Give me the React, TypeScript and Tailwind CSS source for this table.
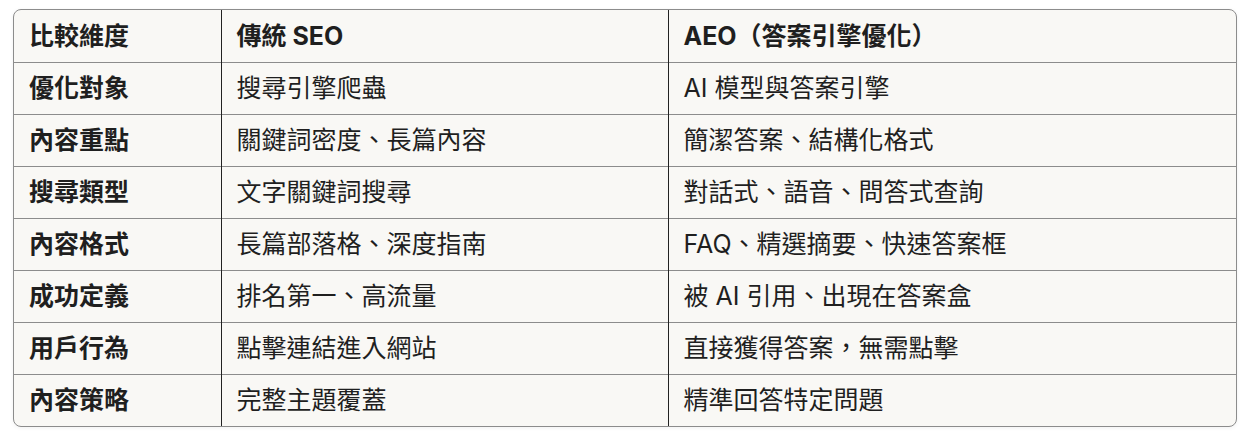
const header = ["比較維度", "傳統 SEO", "AEO（答案引擎優化）"];

const rows: [string, string, string][] = [
  ["優化對象", "搜尋引擎爬蟲", "AI 模型與答案引擎"],
  ["內容重點", "關鍵詞密度、長篇內容", "簡潔答案、結構化格式"],
  ["搜尋類型", "文字關鍵詞搜尋", "對話式、語音、問答式查詢"],
  ["內容格式", "長篇部落格、深度指南", "FAQ、精選摘要、快速答案框"],
  ["成功定義", "排名第一、高流量", "被 AI 引用、出現在答案盒"],
  ["用戶行為", "點擊連結進入網站", "直接獲得答案，無需點擊"],
  ["內容策略", "完整主題覆蓋", "精準回答特定問題"],
];

export default function App() {
  return (
    <div
      className="w-[1248px] h-[440px] bg-white pt-[9px] pl-[13px]"
      style={{ fontFamily: 'Inter, "Noto Sans CJK TC", sans-serif' }}
    >
      <div className="w-[1224px] rounded-lg border border-[#8c8c8c] bg-[#f9f8f5] overflow-hidden shadow-[0_1px_4px_rgba(0,0,0,0.06)]">
        <table className="w-full border-collapse table-fixed text-[#1f1f1f] text-[25px] leading-[30px]">
          <colgroup>
            <col className="w-[207px]" />
            <col className="w-[447px]" />
            <col />
          </colgroup>
          <thead>
            <tr className="h-[52px]">
              {header.map((h, i) => (
                <th
                  key={h}
                  className={`text-left font-bold pl-[15px] ${
                    i > 0 ? "border-l border-[#222]" : ""
                  }`}
                >
                  {h}
                </th>
              ))}
            </tr>
          </thead>
          <tbody>
            {rows.map((r) => (
              <tr key={r[0]} className="h-[52px] border-t border-[#8c8c8c]">
                <td className="pl-[15px] font-bold">{r[0]}</td>
                <td className="pl-[15px] border-l border-[#222]">{r[1]}</td>
                <td className="pl-[15px] border-l border-[#222]">{r[2]}</td>
              </tr>
            ))}
          </tbody>
        </table>
      </div>
    </div>
  );
}
